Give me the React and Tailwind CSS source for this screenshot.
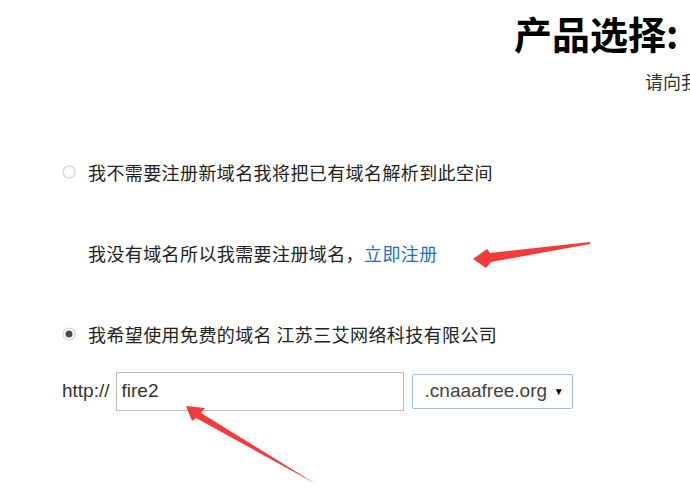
import React from "react";

function Radio({ checked }) {
  return (
    <svg width="16" height="16" viewBox="0 0 16 16" className="shrink-0">
      <circle cx="8" cy="8" r="6" fill="white" stroke="#d4d4d4" strokeWidth="1.2" />
      {checked && <circle cx="8" cy="8" r="3.5" fill="#4a4a4a" />}
    </svg>
  );
}

export default function App() {
  const cjk = { fontFamily: '"Noto Sans CJK SC", "Noto Sans", sans-serif' };

  return (
    <div
      className="relative w-[690px] h-[501px] overflow-hidden bg-white text-[#222]"
      style={cjk}
    >
      {/* title */}
      <div className="pl-[514px] pt-[7px] whitespace-nowrap">
        <h1 className="text-[38px] font-bold leading-[52px] text-black">产品选择:</h1>
      </div>
      <div className="pl-[645px] mt-[10px] whitespace-nowrap text-[18px] leading-[24px] text-[#333]">
        请向我们选择您需要的产品
      </div>

      {/* options */}
      <div className="pl-[61px] mt-[67px] flex flex-col">
        <label className="flex items-center gap-[11px] text-[18px] leading-[24px] tracking-[0.4px] whitespace-nowrap">
          <Radio />
          <span>我不需要注册新域名我将把已有域名解析到此空间</span>
        </label>

        <p className="mt-[57px] pl-[27px] text-[18px] leading-[24px] tracking-[0.4px] whitespace-nowrap">
          我没有域名所以我需要注册域名，
          <a href="#" className="text-[#2471c4]">立即注册</a>
        </p>

        <label className="mt-[57px] flex items-center gap-[11px] text-[18px] leading-[24px] tracking-[0.4px] whitespace-nowrap">
          <Radio checked />
          <span>我希望使用免费的域名 江苏三艾网络科技有限公司</span>
        </label>

        <div
          className="mt-[26px] flex items-center"
          style={{ fontFamily: '"Liberation Sans", Arial, sans-serif' }}
        >
          <span className="text-[19px] text-[#333] pl-[1px]">http://</span>
          <div className="ml-[6px] w-[288px] h-[39px] border border-[#bdbdbd] flex items-center px-[5px] text-[19px] text-[#333]">
            fire2
          </div>
          <div className="ml-[8px] w-[161px] h-[35px] border border-[#9cc0f5] rounded-[2px] flex items-center justify-between pl-[12px] pr-[8px] text-[19px] text-[#444]">
            <span>.cnaaafree.org</span>
            <span className="text-[10px] text-black">▼</span>
          </div>
        </div>
      </div>

      {/* annotation arrows */}
      <svg className="absolute inset-0 pointer-events-none" width="690" height="501">
        <polygon
          points="473,259 487,249 490,253 590,242 590,244 491,262 486,268"
          fill="#f43b3b"
        />
        <polygon
          points="186,406 205,408 201,413 316,484 196,418 192,421"
          fill="#f43b3b"
        />
      </svg>
    </div>
  );
}
